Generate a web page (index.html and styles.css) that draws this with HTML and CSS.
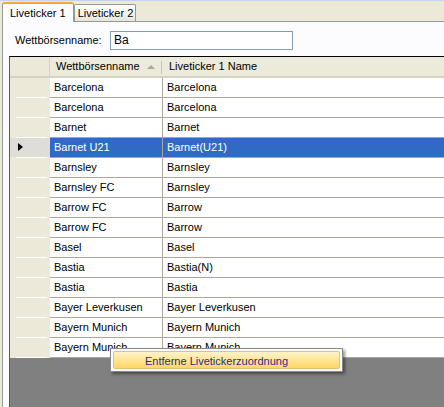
FILE: index.html
```html
<!DOCTYPE html>
<html>
<head>
<meta charset="utf-8">
<link rel="stylesheet" href="styles.css">
</head>
<body>
<div class="window">
  <div class="tabstrip">
    <div class="tab active">Liveticker 1</div>
    <div class="tab">Liveticker 2</div>
  </div>
  <div class="page">
    <div class="filter">
      <label class="lbl">Wettbörsenname:</label>
      <div class="textbox">Ba</div>
    </div>
    <div class="grid">
      <div class="rows">
        <div class="row head">
          <div class="rh"></div>
          <div class="c c1">Wettbörsenname<span class="sort"></span></div>
          <div class="c c2">Liveticker 1 Name</div>
        </div>
        <div class="row"><div class="rh"></div><div class="c c1">Barcelona</div><div class="c c2">Barcelona</div></div>
        <div class="row"><div class="rh"></div><div class="c c1">Barcelona</div><div class="c c2">Barcelona</div></div>
        <div class="row"><div class="rh"></div><div class="c c1">Barnet</div><div class="c c2">Barnet</div></div>
        <div class="row sel"><div class="rh"><span class="arrow"></span></div><div class="c c1">Barnet U21</div><div class="c c2">Barnet(U21)</div></div>
        <div class="row"><div class="rh"></div><div class="c c1">Barnsley</div><div class="c c2">Barnsley</div></div>
        <div class="row"><div class="rh"></div><div class="c c1">Barnsley FC</div><div class="c c2">Barnsley</div></div>
        <div class="row"><div class="rh"></div><div class="c c1">Barrow FC</div><div class="c c2">Barrow</div></div>
        <div class="row"><div class="rh"></div><div class="c c1">Barrow FC</div><div class="c c2">Barrow</div></div>
        <div class="row"><div class="rh"></div><div class="c c1">Basel</div><div class="c c2">Basel</div></div>
        <div class="row"><div class="rh"></div><div class="c c1">Bastia</div><div class="c c2">Bastia(N)</div></div>
        <div class="row"><div class="rh"></div><div class="c c1">Bastia</div><div class="c c2">Bastia</div></div>
        <div class="row"><div class="rh"></div><div class="c c1">Bayer Leverkusen</div><div class="c c2">Bayer Leverkusen</div></div>
        <div class="row"><div class="rh"></div><div class="c c1">Bayern Munich</div><div class="c c2">Bayern Munich</div></div>
        <div class="row"><div class="rh"></div><div class="c c1">Bayern Munich</div><div class="c c2">Bayern Munich</div></div>
      </div>
      <div class="empty"></div>
    </div>
  </div>
  <div class="menu">
    <div class="item">Entferne Livetickerzuordnung</div>
  </div>
</div>
</body>
</html>
```
FILE: styles.css
```css
html, body {
  margin: 0;
  padding: 0;
}
body {
  width: 444px;
  height: 407px;
  overflow: hidden;
  font-family: "Liberation Sans", Arial, sans-serif;
  font-size: 11px;
  color: #000;
  background: #ECE9D8;
}
.window {
  position: relative;
  width: 444px;
  height: 407px;
  border-top: 1px solid #C3D4EE;
  box-sizing: border-box;
}
.tabstrip {
  display: flex;
  align-items: flex-end;
  height: 20px;
  padding-left: 2px;
  background: #ECE9D8;
  position: relative;
  z-index: 2;
}
.tab {
  height: 16px;
  line-height: 16px;
  padding: 0 2px 0 3px;
  border: 1px solid #919B9C;
  border-bottom: none;
  border-radius: 2px 2px 0 0;
  background: linear-gradient(#FFFFFF, #F3F3EF 60%, #E6E4DA);
  font-size: 11px;
}
.tab.active {
  background: #FCFCFE;
  border-top: 2px solid #F2A83A;
  border-radius: 3px 3px 0 0;
  margin-bottom: -1px;
  box-sizing: border-box;
  height: 20px;
  padding: 1px 7px 0 7px;
  line-height: 17px;
  font-size: 11px;
}
.page {
  margin-left: 2px;
  border-left: 1px solid #919B9C;
  border-top: 1px solid #919B9C;
  background: #FCFCFE;
  height: 386px;
  padding-left: 6px;
  box-sizing: border-box;
}
.filter {
  display: flex;
  align-items: center;
  height: 34px;
}
.lbl {
  margin-left: 6px;
  width: 95px;
  padding-top: 2px;
}
.textbox {
  width: 178px;
  height: 17px;
  line-height: 17px;
  border: 1px solid #7F9DB9;
  background: #FFFFFF;
  padding-left: 3px;
  font-size: 12px;
  margin-top: 2px;
}
.grid {
  border-top: 1px solid #000000;
  border-left: 1px solid #5A5A5A;
  height: 360px;
  background: #808080;
  overflow: hidden;
}
.rows {
  display: flex;
  flex-direction: column;
}
.row {
  display: grid;
  grid-template-columns: 40px 113px 1fr;
  height: 20px;
}
.rh {
  position: relative;
  background: #ECE9D8;
  border-bottom: 1px solid #ECE9D8;
  box-sizing: border-box;
}
.rh::after {
  content: "";
  position: absolute;
  left: 6px;
  right: 3px;
  bottom: -1px;
  height: 1px;
  background: #FFFFFF;
}
.c {
  background: #FFFFFF;
  border-right: 1px solid #ACA899;
  border-bottom: 1px solid #ACA899;
  box-sizing: border-box;
  padding-left: 4px;
  line-height: 19px;
  white-space: nowrap;
  overflow: hidden;
}
.c2 {
  border-right: none;
}
.head {
  height: 21px;
}
.head .rh {
  border-right: 1px solid #D5D2CA;
  border-bottom: 2px solid #D6D2C2;
}
.head .rh::after {
  display: none;
}
.head .c {
  position: relative;
  background: #EBEADB;
  border-bottom: 2px solid #D6D2C2;
  border-right: none;
  line-height: 19px;
  padding-left: 6px;
}
.head .c1::after {
  content: "";
  position: absolute;
  right: 1px;
  top: 4px;
  height: 13px;
  width: 1px;
  background: #C7C5B2;
}
.head .c2 {
  padding-left: 6px;
}
.sort {
  position: absolute;
  left: 97px;
  top: 8px;
  width: 0;
  height: 0;
  border-left: 4px solid transparent;
  border-right: 4px solid transparent;
  border-bottom: 4px solid #ACA899;
}
.sel .c {
  background: #316AC5;
  color: #FFFFFF;
}
.sel .rh {
  background: #DEDDD8;
}
.arrow {
  position: absolute;
  left: 8px;
  top: 5px;
  width: 0;
  height: 0;
  border-top: 4px solid transparent;
  border-bottom: 4px solid transparent;
  border-left: 5px solid #000000;
}
.empty {
  height: 60px;
}
.menu {
  position: absolute;
  left: 110px;
  top: 347px;
  width: 233px;
  height: 24px;
  box-sizing: border-box;
  border: 1px solid #8A8A8A;
  background: #FAFAFA;
  padding: 2px;
  box-shadow: 2px 2px 3px rgba(0, 0, 0, 0.45);
}
.item {
  height: 18px;
  line-height: 18px;
  box-sizing: border-box;
  border: 1px solid #E3C272;
  border-radius: 2px;
  background: linear-gradient(#FFF3C9, #FFE594 50%, #FFD666);
  color: #2B2B8C;
  padding-left: 31px;
  font-size: 11px;
}
```
